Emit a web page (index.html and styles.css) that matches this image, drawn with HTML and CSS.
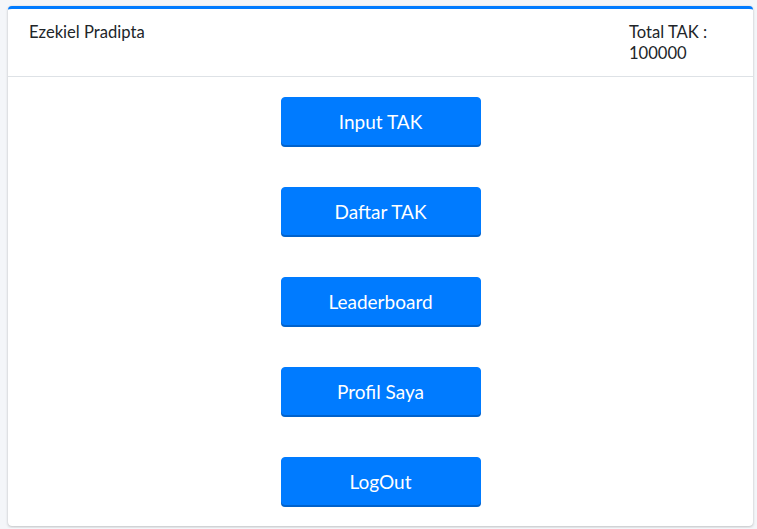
FILE: index.html
```html
<!DOCTYPE html>
<html>
<head>
<meta charset="utf-8">
<link rel="stylesheet" href="styles.css">
</head>
<body>
<div class="card">
  <div class="card-header">
    <div class="name">Ezekiel Pradipta</div>
    <div class="total">Total TAK :<br>100000</div>
  </div>
  <div class="card-body">
    <button class="btn">Input TAK</button>
    <button class="btn">Daftar TAK</button>
    <button class="btn">Leaderboard</button>
    <button class="btn">Profil Saya</button>
    <button class="btn">LogOut</button>
  </div>
</div>
</body>
</html>
```
FILE: styles.css
```css
html, body { margin: 0; padding: 0; }
body {
  background: #f4f6f9;
  font-family: Lato, "Noto Sans", sans-serif;
  color: #212529;
  padding: 6px 4px 2px 8px;
}
.card {
  background: #fff;
  border-top: 3px solid #007bff;
  border-radius: 4px;
  box-shadow: 0 0 1px rgba(0,0,0,.125), 0 1px 3px rgba(0,0,0,.2);
  height: 520px;
  box-sizing: border-box;
  display: flex;
  flex-direction: column;
}
.card-header {
  display: flex;
  justify-content: space-between;
  padding: 13px 20px 11px 20px;
  border-bottom: 1px solid #dee2e6;
  font-size: 16.6px;
  line-height: 21px;
  height: 68px;
  box-sizing: border-box;
}
.name { padding-left: 1px; }
.total { width: 104px; padding-left: 1px; }
.card-body {
  display: flex;
  flex-direction: column;
  align-items: center;
  gap: 42px;
  padding-top: 20px;
}
.btn {
  width: 200px;
  height: 48px;
  background: #007bff;
  color: #fff;
  border: 1px solid #007bff;
  border-radius: 4px;
  box-shadow: 0 2px 0 #0062cc;
  font-family: inherit;
  font-size: 19px;
  padding: 0;
}
```
